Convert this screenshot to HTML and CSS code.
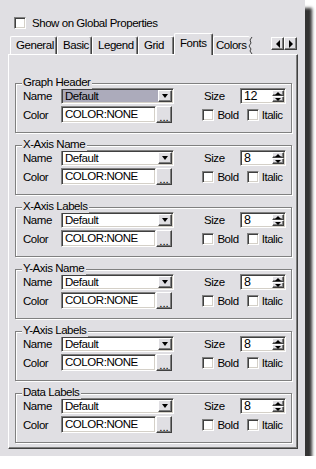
FILE: index.html
```html
<!DOCTYPE html>
<html lang="en">
<head>
    <meta charset="UTF-8">
    <meta name="viewport" content="width=device-width, initial-scale=1.0">
    <title>Fonts Properties</title>
    <link rel="stylesheet" href="styles.css">
</head>
<body>
    <div class="window">
        <div class="global-row">
            <span class="check"></span>
            <span>Show on Global Properties</span>
        </div>

        <div class="tabs">
            <span class="tab tab-general">General</span>
            <span class="tab tab-basic">Basic</span>
            <span class="tab tab-legend">Legend</span>
            <span class="tab tab-grid">Grid</span>
            <span class="tab active">Fonts</span>
            <span class="tab tab-colors">Colors
                <svg class="torn" width="6" height="17" viewBox="0 0 6 17">
                    <polyline points="4,0 2,3 3,6 1,9 3,12 2,14 4,17" fill="none" stroke="#404040" stroke-width="1"/>
                </svg>
            </span>
            <span class="scroll">
                <span class="btn arrow-btn"><span class="tri-left"></span></span>
                <span class="btn arrow-btn"><span class="tri-right"></span></span>
            </span>
        </div>

        <div class="panel">
            <div class="group">
                <span class="group-title">Graph Header</span>
                <div class="row">
                    <span class="lbl">Name</span>
                    <span class="combo selected"><span class="combo-text">Default</span><span class="btn combo-btn"><span class="tri-down"></span></span></span>
                    <span class="size-lbl">Size</span>
                    <span class="spin"><span class="spin-text">12</span><span class="spin-btns"><span class="btn"><span class="tri-up-s"></span></span><span class="btn"><span class="tri-down-s"></span></span></span></span>
                </div>
                <div class="row row2">
                    <span class="lbl">Color</span>
                    <span class="textbox">COLOR:NONE</span>
                    <span class="btn dots">...</span>
                    <span class="checkline bold"><span class="check"></span>Bold</span>
                    <span class="checkline"><span class="check"></span>Italic</span>
                </div>
            </div>

            <div class="group">
                <span class="group-title">X-Axis Name</span>
                <div class="row">
                    <span class="lbl">Name</span>
                    <span class="combo"><span class="combo-text">Default</span><span class="btn combo-btn"><span class="tri-down"></span></span></span>
                    <span class="size-lbl">Size</span>
                    <span class="spin"><span class="spin-text">8</span><span class="spin-btns"><span class="btn"><span class="tri-up-s"></span></span><span class="btn"><span class="tri-down-s"></span></span></span></span>
                </div>
                <div class="row row2">
                    <span class="lbl">Color</span>
                    <span class="textbox">COLOR:NONE</span>
                    <span class="btn dots">...</span>
                    <span class="checkline bold"><span class="check"></span>Bold</span>
                    <span class="checkline"><span class="check"></span>Italic</span>
                </div>
            </div>

            <div class="group">
                <span class="group-title">X-Axis Labels</span>
                <div class="row">
                    <span class="lbl">Name</span>
                    <span class="combo"><span class="combo-text">Default</span><span class="btn combo-btn"><span class="tri-down"></span></span></span>
                    <span class="size-lbl">Size</span>
                    <span class="spin"><span class="spin-text">8</span><span class="spin-btns"><span class="btn"><span class="tri-up-s"></span></span><span class="btn"><span class="tri-down-s"></span></span></span></span>
                </div>
                <div class="row row2">
                    <span class="lbl">Color</span>
                    <span class="textbox">COLOR:NONE</span>
                    <span class="btn dots">...</span>
                    <span class="checkline bold"><span class="check"></span>Bold</span>
                    <span class="checkline"><span class="check"></span>Italic</span>
                </div>
            </div>

            <div class="group">
                <span class="group-title">Y-Axis Name</span>
                <div class="row">
                    <span class="lbl">Name</span>
                    <span class="combo"><span class="combo-text">Default</span><span class="btn combo-btn"><span class="tri-down"></span></span></span>
                    <span class="size-lbl">Size</span>
                    <span class="spin"><span class="spin-text">8</span><span class="spin-btns"><span class="btn"><span class="tri-up-s"></span></span><span class="btn"><span class="tri-down-s"></span></span></span></span>
                </div>
                <div class="row row2">
                    <span class="lbl">Color</span>
                    <span class="textbox">COLOR:NONE</span>
                    <span class="btn dots">...</span>
                    <span class="checkline bold"><span class="check"></span>Bold</span>
                    <span class="checkline"><span class="check"></span>Italic</span>
                </div>
            </div>

            <div class="group">
                <span class="group-title">Y-Axis Labels</span>
                <div class="row">
                    <span class="lbl">Name</span>
                    <span class="combo"><span class="combo-text">Default</span><span class="btn combo-btn"><span class="tri-down"></span></span></span>
                    <span class="size-lbl">Size</span>
                    <span class="spin"><span class="spin-text">8</span><span class="spin-btns"><span class="btn"><span class="tri-up-s"></span></span><span class="btn"><span class="tri-down-s"></span></span></span></span>
                </div>
                <div class="row row2">
                    <span class="lbl">Color</span>
                    <span class="textbox">COLOR:NONE</span>
                    <span class="btn dots">...</span>
                    <span class="checkline bold"><span class="check"></span>Bold</span>
                    <span class="checkline"><span class="check"></span>Italic</span>
                </div>
            </div>

            <div class="group">
                <span class="group-title">Data Labels</span>
                <div class="row">
                    <span class="lbl">Name</span>
                    <span class="combo"><span class="combo-text">Default</span><span class="btn combo-btn"><span class="tri-down"></span></span></span>
                    <span class="size-lbl">Size</span>
                    <span class="spin"><span class="spin-text">8</span><span class="spin-btns"><span class="btn"><span class="tri-up-s"></span></span><span class="btn"><span class="tri-down-s"></span></span></span></span>
                </div>
                <div class="row row2">
                    <span class="lbl">Color</span>
                    <span class="textbox">COLOR:NONE</span>
                    <span class="btn dots">...</span>
                    <span class="checkline bold"><span class="check"></span>Bold</span>
                    <span class="checkline"><span class="check"></span>Italic</span>
                </div>
            </div>
        </div>
    </div>
</body>
</html>
```

FILE: styles.css
```css
body {
    margin: 0;
    background-color: #fff;
    font-family: "Liberation Sans", Arial, sans-serif;
    font-size: 11.5px;
    letter-spacing: -0.45px;
    color: #000;
}

.window {
    width: 305px;
    height: 456px;
    box-sizing: border-box;
    background-color: #e0dfe3;
    box-shadow: 7px 8px 3px #333;
    padding: 17px 7px 7px 8px;
    display: flex;
    flex-direction: column;
}

.global-row {
    display: flex;
    align-items: center;
    height: 12px;
    padding-left: 6px;
    gap: 6px;
}

/* sunken white box */
.check,
.combo,
.spin,
.textbox {
    box-sizing: border-box;
    border: 1px solid;
    border-color: #808080 #fff #fff #808080;
    box-shadow: inset 1px 1px #404040, inset -1px -1px #d4d0c8;
    background-color: #fff;
}

.check {
    width: 12px;
    height: 12px;
    flex: none;
}

/* raised button */
.btn {
    box-sizing: border-box;
    border: 1px solid;
    border-color: #fff #404040 #404040 #fff;
    box-shadow: inset -1px -1px #808080;
    background-color: #e0dfe3;
    display: flex;
    align-items: center;
    justify-content: center;
}

.tabs {
    display: flex;
    align-items: flex-end;
    height: 24px;
    margin-top: 1px;
    padding-left: 2px;
}

.tab {
    box-sizing: border-box;
    height: 18px;
    line-height: 16px;
    padding-left: 5px;
    border-left: 1px solid #fff;
    border-top: 1px solid #fff;
    border-right: 1px solid #404040;
    border-top-left-radius: 2px;
    border-top-right-radius: 2px;
    box-shadow: inset -1px 0 #808080;
    white-space: nowrap;
}

.tab-general { width: 47px; }
.tab-basic { width: 35px; }
.tab-legend { width: 46px; }
.tab-grid { width: 36px; }

.tab.active {
    width: 39px;
    height: 22px;
    line-height: 18px;
    margin-bottom: -1px;
    position: relative;
    z-index: 1;
    background-color: #e0dfe3;
}

.tab-colors {
    width: 37px;
    border-right: none;
    box-shadow: none;
    display: flex;
    align-items: flex-start;
    padding-left: 2px;
}

.torn {
    margin-left: 1px;
    flex: none;
}

.scroll {
    margin-left: auto;
    margin-right: 1px;
    align-self: flex-start;
    margin-top: 7px;
    display: flex;
}

.arrow-btn {
    width: 13px;
    height: 13px;
}

.tri-left {
    border-top: 4px solid transparent;
    border-bottom: 4px solid transparent;
    border-right: 4px solid #000;
}

.tri-right {
    border-top: 4px solid transparent;
    border-bottom: 4px solid transparent;
    border-left: 4px solid #000;
}

.tri-down {
    border-left: 3px solid transparent;
    border-right: 3px solid transparent;
    border-top: 4px solid #000;
}

.tri-up-s {
    border-left: 3px solid transparent;
    border-right: 3px solid transparent;
    border-bottom: 3px solid #000;
}

.tri-down-s {
    border-left: 3px solid transparent;
    border-right: 3px solid transparent;
    border-top: 3px solid #000;
}

.panel {
    flex: 1;
    box-sizing: border-box;
    border: 1px solid;
    border-color: #fff #404040 #404040 #fff;
    box-shadow: inset -1px -1px #808080;
    padding: 28px 5px 0 6px;
    display: flex;
    flex-direction: column;
    gap: 12px;
}

.group {
    position: relative;
    height: 50px;
    box-sizing: border-box;
    border: 1px solid #808080;
    box-shadow: 1px 1px 0 #fff, inset 1px 1px 0 #fff;
    padding: 4px 0 0 7px;
}

.group-title {
    position: absolute;
    top: -8px;
    left: 6px;
    padding: 0 2px 0 1px;
    line-height: 13px;
    background-color: #e0dfe3;
}

.row {
    display: flex;
    align-items: center;
    height: 16px;
}

.row2 {
    height: 17px;
    margin-top: 2px;
}

.lbl {
    width: 38px;
    flex: none;
}

.combo {
    width: 113px;
    height: 16px;
    display: flex;
    align-items: center;
    padding: 1px 1px 1px 3px;
}

.combo.selected {
    background-color: #acabbb;
}

.combo-text {
    flex: 1;
}

.combo-btn {
    width: 14px;
    height: 12px;
}

.size-lbl {
    width: 36px;
    margin-left: 30px;
}

.spin {
    width: 46px;
    height: 16px;
    display: flex;
    align-items: center;
    padding: 1px 1px 1px 3px;
}

.spin-text {
    flex: 1;
    font-size: 12.5px;
}

.spin-btns {
    display: flex;
    flex-direction: column;
    width: 12px;
    height: 12px;
}

.spin-btns .btn {
    height: 6px;
}

.textbox {
    width: 96px;
    height: 17px;
    line-height: 15px;
    padding-left: 3px;
}

.dots {
    width: 17px;
    height: 17px;
    align-items: flex-end;
    line-height: 10px;
    letter-spacing: 0;
}

.checkline {
    width: 45px;
    display: flex;
    align-items: center;
    gap: 3px;
}

.checkline.bold {
    margin-left: 30px;
}
```
